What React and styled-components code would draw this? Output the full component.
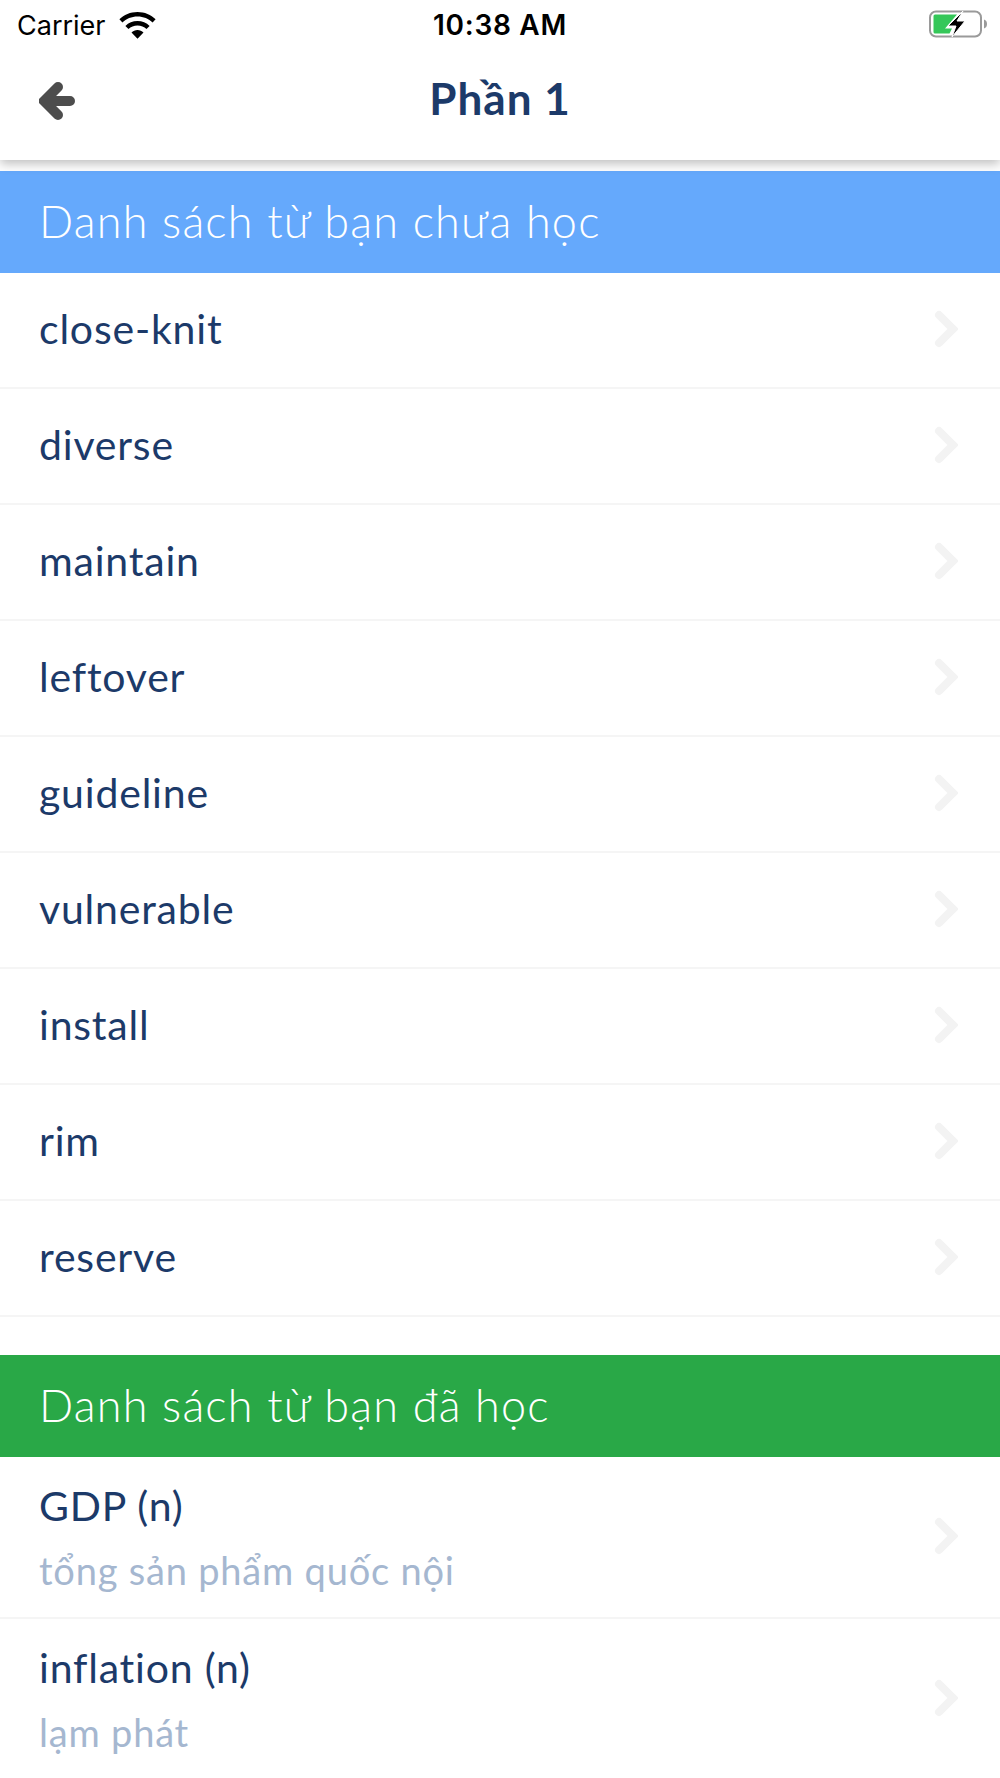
import React from "react";
import styled, { createGlobalStyle } from "styled-components";

const GlobalStyle = createGlobalStyle`
  html, body {
    margin: 0;
    padding: 0;
    background: #fff;
  }
`;

const Screen = styled.div`
  width: 1000px;
  height: 1778px;
  overflow: hidden;
  background: #fff;
  font-family: Lato, "Noto Sans", sans-serif;
`;

const StatusBar = styled.div`
  position: relative;
  z-index: 2;
  height: 50px;
  display: grid;
  grid-template-columns: 1fr auto 1fr;
  align-items: center;
  padding: 0 11px 0 17px;
  background: #fff;
  font-family: Inter, "Liberation Sans", sans-serif;
  color: #000;
  font-size: 27px;
`;

const Carrier = styled.div`
  display: flex;
  align-items: center;
  gap: 13px;
`;

const Clock = styled.div`
  margin-right: 6px;
  font-weight: 600;
  font-size: 28px;
  letter-spacing: 0.7px;
`;

const BatteryWrap = styled.div`
  justify-self: end;
  display: flex;
  margin-bottom: 3px;
`;

const NavBar = styled.header`
  height: 110px;
  display: flex;
  align-items: center;
  justify-content: center;
  position: relative;
  background: #fff;
  box-shadow: 0 4px 10px rgba(0, 0, 0, 0.25);
`;

const BackButton = styled.div`
  position: absolute;
  left: 39px;
  top: 32px;
  display: flex;
`;

const Title = styled.h1`
  margin: 0 0 15px;
  font-size: 44px;
  font-weight: 700;
  letter-spacing: 1px;
  color: #1c3a69;
`;

const Body = styled.main`
  padding-top: 11px;
`;

const SectionHeader = styled.div`
  height: 100px;
  padding-bottom: 2px;
  display: flex;
  align-items: center;
  padding-left: 39px;
  background: ${(p) => p.$color};
  color: #fff;
  font-size: 45px;
  font-weight: 300;
  letter-spacing: 1.2px;
`;

const Section = styled.section`
  margin-bottom: 38px;
`;

const Row = styled.div`
  height: ${(p) => (p.$tall ? "160px" : "114px")};
  display: flex;
  align-items: center;
  justify-content: space-between;
  padding: 0 42px 0 39px;
  border-bottom: 2px solid #f5f5f5;
`;

const RowText = styled.div`
  display: flex;
  flex-direction: column;
  gap: 14px;
  margin-top: 5px;
`;

const Word = styled.div`
  font-size: 41px;
  line-height: 50px;
  color: #1c3a69;
  letter-spacing: 0.8px;
  margin-top: -3px;
`;

const Meaning = styled.div`
  font-size: 38px;
  line-height: 50px;
  color: #a5b7d0;
  letter-spacing: 0.8px;
`;

const ChevronWrap = styled.div`
  display: flex;
  margin-top: -2px;
`;

const unlearned = [
  "close-knit",
  "diverse",
  "maintain",
  "leftover",
  "guideline",
  "vulnerable",
  "install",
  "rim",
  "reserve",
];

const learned = [
  { word: "GDP (n)", meaning: "tổng sản phẩm quốc nội" },
  { word: "inflation (n)", meaning: "lạm phát" },
];

function WifiIcon() {
  return (
    <svg width="37" height="27" viewBox="0 0 37 27">
      <path
        d="M18.5 0C11.4 0 5 2.8 0.4 7.3l3 3.2C7.2 6.8 12.6 4.5 18.5 4.5s11.3 2.3 15.1 6l3-3.2C32 2.8 25.6 0 18.5 0zM18.5 9c-4.7 0-9 1.9-12.1 4.9l3.1 3.2c2.3-2.2 5.5-3.6 9-3.6s6.7 1.4 9 3.6l3.1-3.2C27.5 10.9 23.2 9 18.5 9zM18.5 18c-2.3 0-4.4 0.9-6 2.4l6 6.4 6-6.4c-1.6-1.5-3.7-2.400-6-2.400z"
        fill="#000"
      />
    </svg>
  );
}

function BatteryIcon() {
  return (
    <svg width="60" height="28" viewBox="0 0 60 28">
      <rect x="1" y="1.5" width="51" height="25" rx="6" fill="none" stroke="#9a9a9a" strokeWidth="2" />
      <path d="M55 9.5c2 .6 3 2.2 3 4.5s-1 3.900-3 4.500z" fill="#9a9a9a" />
      <path d="M6 4.500h22l-12 14h7l-2.500 5H6a1.500 1.500 0 0 1-1.500-1.500V6A1.500 1.500 0 0 1 6 4.500z" fill="#35c759" />
      <path d="M34 1 L19 16 h8 l-4 11 L36 11 h-8 z" fill="#000" stroke="#fff" strokeWidth="1" />
    </svg>
  );
}

function BackArrow() {
  return (
    <svg width="36" height="38" viewBox="0 0 36 38">
      <path
        d="M19 5 L5 19 L19 33 M6 19 H31"
        fill="none"
        stroke="#4d4d4d"
        strokeWidth="10"
        strokeLinecap="round"
        strokeLinejoin="miter"
      />
    </svg>
  );
}

function ChevronIcon() {
  return (
    <svg width="24" height="38" viewBox="0 0 24 38">
      <path
        d="M5 5 L19 19 L5 33"
        fill="none"
        stroke="#f3f3f3"
        strokeWidth="8"
        strokeLinecap="round"
        strokeLinejoin="miter"
      />
    </svg>
  );
}

export default function App() {
  return (
    <>
      <GlobalStyle />
      <Screen>
        <StatusBar>
          <Carrier>
            Carrier
            <WifiIcon />
          </Carrier>
          <Clock>10:38 AM</Clock>
          <BatteryWrap>
            <BatteryIcon />
          </BatteryWrap>
        </StatusBar>
        <NavBar>
          <BackButton>
            <BackArrow />
          </BackButton>
          <Title>Phần 1</Title>
        </NavBar>
        <Body>
          <Section>
            <SectionHeader $color="#65a9fc">Danh sách từ bạn chưa học</SectionHeader>
            {unlearned.map((word) => (
              <Row key={word}>
                <Word>{word}</Word>
                <ChevronWrap>
                  <ChevronIcon />
                </ChevronWrap>
              </Row>
            ))}
          </Section>
          <Section>
            <SectionHeader $color="#29a847">Danh sách từ bạn đã học</SectionHeader>
            {learned.map((item) => (
              <Row key={item.word} $tall>
                <RowText>
                  <Word>{item.word}</Word>
                  <Meaning>{item.meaning}</Meaning>
                </RowText>
                <ChevronWrap>
                  <ChevronIcon />
                </ChevronWrap>
              </Row>
            ))}
          </Section>
        </Body>
      </Screen>
    </>
  );
}
